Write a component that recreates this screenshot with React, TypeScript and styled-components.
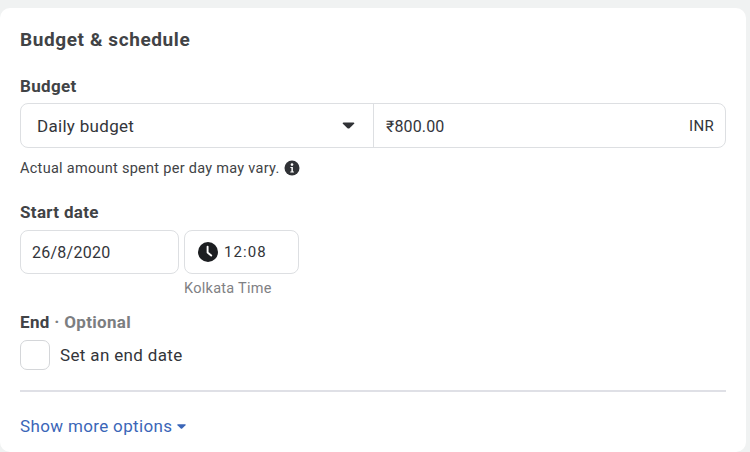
import React from "react";
import styled, { createGlobalStyle } from "styled-components";

const Global = createGlobalStyle`
  html, body { margin: 0; padding: 0; background: #f0f2f2; width: 750px; height: 452px; overflow: hidden; }
  * { box-sizing: border-box; }
`;

const Card = styled.section`
  width: 746px;
  height: 444px;
  margin-top: 8px;
  padding: 21px 20px 0;
  background: #fff;
  border-radius: 10px;
  font-family: Roboto, "Liberation Sans", sans-serif;
  color: #1c1e21;
  display: flex;
  flex-direction: column;
`;

const Title = styled.h2`
  margin: 0;
  font-size: 19px;
  line-height: 22px;
  font-weight: 700;
  letter-spacing: 0.6px;
  color: #414346;
`;

const Label = styled.div<{ $mt: number }>`
  margin-top: ${(p) => p.$mt}px;
  font-size: 17px;
  line-height: 20px;
  font-weight: 700;
  letter-spacing: 0.33px;
  color: #414346;
`;

const Muted = styled.span`
  color: #7c7e81;
`;

const Field = styled.div`
  margin-top: 7px;
  height: 45px;
  display: flex;
  border: 1px solid #dddfe2;
  border-radius: 8px;
`;

const SelectPart = styled.div`
  width: 353px;
  padding: 0 18px 0 16px;
  display: flex;
  align-items: center;
  justify-content: space-between;
  border-right: 1px solid #dddfe2;
  font-size: 17px;
  letter-spacing: 0.3px;
  color: #33353a;
`;

const AmountPart = styled.div`
  flex: 1;
  padding: 1px 11px 0 12px;
  display: flex;
  align-items: center;
  justify-content: space-between;
  font-size: 16px;
  letter-spacing: 0.15px;
  color: #33353a;
`;

const Currency = styled.span`
  font-size: 15px;
  letter-spacing: 0.3px;
`;

const Helper = styled.div`
  margin-top: 10px;
  height: 20px;
  display: flex;
  align-items: center;
  gap: 4px;
  font-size: 14.5px;
  letter-spacing: 0.28px;
  color: #414346;
`;

const DateRow = styled.div`
  margin-top: 8px;
  display: flex;
  gap: 5px;
`;

const DateBox = styled.div`
  width: 159px;
  height: 44px;
  padding: 0 11px;
  display: flex;
  align-items: center;
  border: 1px solid #dddfe2;
  border-radius: 8px;
  font-size: 16px;
  letter-spacing: 0.25px;
  color: #33353a;
`;

const TimeColumn = styled.div`
  display: flex;
  flex-direction: column;
`;

const TimeBox = styled.div`
  width: 115px;
  height: 44px;
  padding: 0 13px;
  display: flex;
  align-items: center;
  gap: 6px;
  border: 1px solid #dddfe2;
  border-radius: 8px;
  font-size: 15px;
  letter-spacing: 1.1px;
  color: #33353a;
`;

const Zone = styled.div`
  margin-top: 6px;
  font-size: 14.5px;
  line-height: 18px;
  letter-spacing: 0.28px;
  color: #7f8184;
`;

const CheckRow = styled.label`
  margin-top: 8px;
  display: flex;
  align-items: center;
  gap: 10px;
  font-size: 17px;
  letter-spacing: 0.35px;
  color: #33353a;
`;

const CheckBox = styled.span`
  width: 30px;
  height: 30px;
  border: 1px solid #d4d6d9;
  border-radius: 7px;
`;

const Divider = styled.hr`
  width: 706px;
  height: 2px;
  margin: 20px 0 0;
  border: 0;
  background: #dfe0e6;
`;

const MoreLink = styled.a`
  margin-top: 23px;
  display: flex;
  align-items: center;
  gap: 5px;
  font-size: 17px;
  line-height: 22px;
  letter-spacing: 0.35px;
  color: #3b66b8;
`;

const Caret = ({ w, h, color }: { w: number; h: number; color: string }) => (
  <svg width={w} height={h} viewBox="0 0 12 7">
    <path d="M1 0.5h10c.8 0 1.1.8.6 1.3L7 6.2c-.6.5-1.4.5-2 0L.4 1.8C-.1 1.3.2.5 1 .5z" fill={color} />
  </svg>
);

const InfoIcon = () => (
  <svg width="16" height="16" viewBox="0 0 16 16">
    <circle cx="8" cy="8" r="7.5" fill="#303236" />
    <circle cx="8" cy="4.6" r="1.3" fill="#fff" />
    <path d="M6.4 7h2.5v4.4h1v1.1H6.3v-1.1h1.1V8.1h-1z" fill="#fff" />
  </svg>
);

const ClockIcon = () => (
  <svg width="20" height="20" viewBox="0 0 20 20">
    <circle cx="10" cy="10" r="10" fill="#1c1e21" />
    <path d="M9.6 4.6v6l3.6 3" stroke="#fff" strokeWidth="1.9" fill="none" strokeLinecap="round" strokeLinejoin="round" />
  </svg>
);

export default function App() {
  return (
    <>
      <Global />
      <Card>
        <Title>Budget &amp; schedule</Title>
        <Label $mt={25}>Budget</Label>
        <Field>
          <SelectPart>
            Daily budget
            <Caret w={13} h={7} color="#303236" />
          </SelectPart>
          <AmountPart>
            ₹800.00
            <Currency>INR</Currency>
          </AmountPart>
        </Field>
        <Helper>
          Actual amount spent per day may vary.
          <InfoIcon />
        </Helper>
        <Label $mt={24}>Start date</Label>
        <DateRow>
          <DateBox>26/8/2020</DateBox>
          <TimeColumn>
            <TimeBox>
              <ClockIcon />
              12:08
            </TimeBox>
            <Zone>Kolkata Time</Zone>
          </TimeColumn>
        </DateRow>
        <Label $mt={14}>
          End <Muted>· Optional</Muted>
        </Label>
        <CheckRow>
          <CheckBox />
          Set an end date
        </CheckRow>
        <Divider />
        <MoreLink>
          Show more options
          <Caret w={9} h={5} color="#3b66b8" />
        </MoreLink>
      </Card>
    </>
  );
}
